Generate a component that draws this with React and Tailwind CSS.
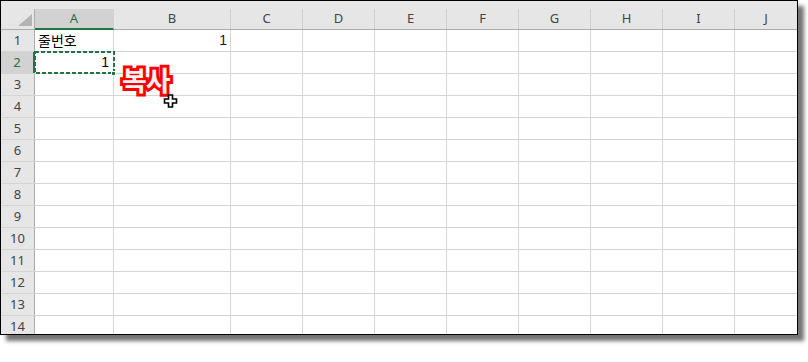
import React from "react";

const columns = [
  { label: "A", w: "w-[79px]" },
  { label: "B", w: "w-[117px]" },
  { label: "C", w: "w-[72px]" },
  { label: "D", w: "w-[72px]" },
  { label: "E", w: "w-[72px]" },
  { label: "F", w: "w-[72px]" },
  { label: "G", w: "w-[72px]" },
  { label: "H", w: "w-[72px]" },
  { label: "I", w: "w-[72px]" },
  { label: "J", w: "flex-1" },
];

const rows = Array.from({ length: 14 }, (_, i) => i + 1);

const CopyCursor = () => (
  <svg width="16" height="14" viewBox="0 0 16 14" className="absolute left-[161px] top-[93px]">
    <path
      d="M5.5 0.5h4v4h4v4h-4v4h-4v-4h-4v-4h4z"
      fill="#fff"
      stroke="#000"
      strokeWidth="1.6"
      transform="translate(1 0.5)"
    />
  </svg>
);

const Cell = ({ col, row }) => {
  const isLast = col.label === "J";
  const base = `${col.w} shrink-0 h-full ${isLast ? "" : "border-r border-[#d4d4d4]"}`;

  if (col.label === "A" && row === 1) {
    return (
      <div className={`${base} flex items-center pl-[3px] text-[14px] text-black font-['Noto_Sans_CJK_KR',sans-serif]`}>
        줄번호
      </div>
    );
  }
  if (col.label === "B" && row === 1) {
    return (
      <div className={`${base} flex items-center justify-end pr-[3px] text-[14px] text-[#2a1030] font-['Liberation_Sans',sans-serif]`}>
        1
      </div>
    );
  }
  if (col.label === "A" && row === 2) {
    return (
      <div className={`${base} relative flex items-center justify-end pr-[4px] text-[14px] text-black font-['Liberation_Sans',sans-serif]`}>
        1
        {/* copy marquee */}
        <svg className="absolute -left-[1px] -top-[1px]" width="81" height="23" viewBox="0 0 81 23">
          <rect x="1" y="1" width="79" height="21" fill="none" stroke="#217346" strokeWidth="2" strokeDasharray="4 2" />
        </svg>
        <div className="absolute -right-[3px] -bottom-[3px] w-[5px] h-[5px] bg-[#217346] border border-white" />
      </div>
    );
  }
  return <div className={base} />;
};

export default function App() {
  return (
    <div className="w-[808px] h-[362px] bg-white relative font-['Noto_Sans',sans-serif]">
      <div className="w-[798px] h-[335px] border border-black bg-white shadow-[6px_6px_4px_rgba(0,0,0,0.55)] overflow-hidden relative">
        {/* column headers */}
        <div className="flex h-[29px] bg-[#e6e6e6] border-b border-[#ababab]">
          <div className="w-[34px] shrink-0 flex flex-col">
            <div className="h-[8px]" />
            <div className="flex-1 border-r border-[#ababab] relative">
              <svg width="14" height="12" viewBox="0 0 14 12" className="absolute right-[2px] bottom-[3px]">
                <polygon points="14,0 14,12 0,12" fill="#b4b4b4" />
              </svg>
            </div>
          </div>
          {columns.map((c) => (
            <div key={c.label} className={`${c.w} shrink-0 flex flex-col`}>
              <div className="h-[8px]" />
              <div
                className={`flex-1 flex items-center justify-center text-[13px] ${
                  c.label === "J" ? "" : "border-r border-[#d0d0d0]"
                } ${
                  c.label === "A"
                    ? "bg-[#d2d2d2] text-[#217346] border-b-2 border-b-[#217346] -mb-[1px]"
                    : "text-[#444]"
                }`}
              >
                {c.label}
              </div>
            </div>
          ))}
        </div>

        {/* rows */}
        {rows.map((r) => (
          <div key={r} className="flex h-[22px] border-b border-[#d4d4d4]">
            <div
              className={`w-[34px] shrink-0 h-full flex items-center justify-center text-[13px] ${
                r === 2
                  ? "bg-[#d2d2d2] text-[#217346] border-r-2 border-[#217346]"
                  : "bg-[#e6e6e6] text-[#444] border-r border-[#ababab]"
              }`}
            >
              {r}
            </div>
            {columns.map((c) => (
              <Cell key={c.label} col={c} row={r} />
            ))}
          </div>
        ))}

        {/* annotation */}
        <div className="absolute left-[121px] top-[65px] text-[27px] font-bold leading-none text-[#fff0f0] [-webkit-text-stroke:6px_#ff0000] [paint-order:stroke_fill] font-['Noto_Sans_CJK_KR',sans-serif] tracking-[-1px]">
          복사
        </div>
        <CopyCursor />
      </div>
    </div>
  );
}
